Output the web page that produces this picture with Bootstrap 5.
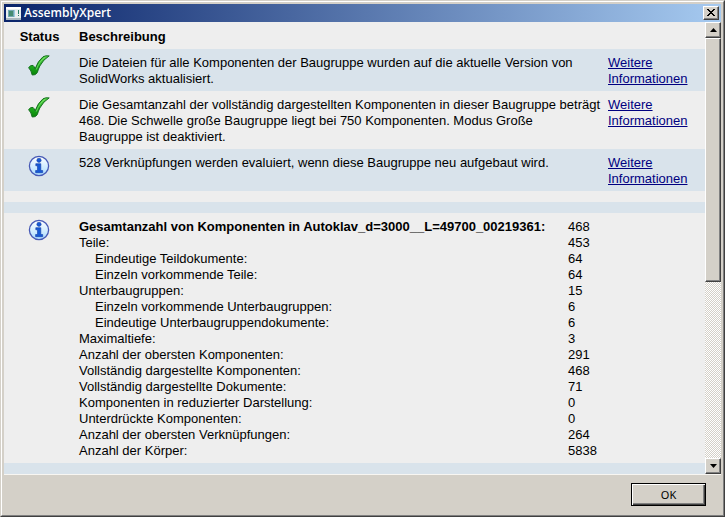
<!DOCTYPE html>
<html lang="de">
<head>
<meta charset="utf-8">
<meta name="viewport" content="width=device-width, initial-scale=1">
<title>AssemblyXpert</title>
<link href="https://cdn.jsdelivr.net/npm/bootstrap@5.3.0/dist/css/bootstrap.min.css" rel="stylesheet">
<style>
  body { font-family: "Liberation Sans", Arial, sans-serif; font-size: 13px; line-height: 16px; color: #000; background: #fff; padding: 0 2px 2px 0; }
  .dialog-frame { background: #d4d0c8; border: 1px solid; border-color: #d4d0c8 #404040 #404040 #d4d0c8; }
  .dialog-edge { border: 1px solid; border-color: #fff #808080 #808080 #fff; padding: 2px; }
  .title-strip { height: 18px; padding: 0 2px; background: linear-gradient(90deg, #0a246a, #a6caf0); color: #fff; }
  .title-strip h1 { font: 600 12px/18px "Open Sans", sans-serif; padding-left: 3px; }
  .face { background: #d4d0c8; border: 1px solid; border-color: #fff #404040 #404040 #fff; box-shadow: inset -1px -1px #808080; padding: 0; border-radius: 0; color: #000; }
  .face svg, .title-strip svg { display: block; }
  .close-btn { width: 16px; height: 14px; }
  .report-pane { background: #eee; border-bottom: 1px solid #f8f6f2; }
  .report { table-layout: fixed; width: 100%; border-collapse: collapse; }
  .report th, .report td { padding: 6px 4px 4px 6px; vertical-align: top; }
  .report thead th { padding-top: 7px; padding-bottom: 4px; }
  .report .finding { white-space: nowrap; padding-right: 0; }
  .report .tint { background: #d9e3eb; }
  .report .gap-row td { height: 11px; padding: 0; }
  .col-status { width: 69px; }
  .col-more { width: 103px; }
  .report .state { padding: 5px 0 0 1px; text-align: center; }
  .report a { color: #000080; }
  .report .totals th, .report .totals td { padding: 0; font-weight: 400; }
  .report .totals .total-main th { font-weight: 700; }
  .report .totals .sub th { padding-left: 16px; }
  .totals-label { width: 489px; }
  .scroller { width: 16px; background: repeating-conic-gradient(#fff 0 25%, #d4d0c8 0 50%) 0 0 / 2px 2px; }
  .scroll-btn { height: 16px; }
  .thumb { height: 244px; }
  .scroll-btn, .thumb { width: 16px; }
  .footer-strip { padding: 8px 15px 9px; }
  .ok-btn { width: 75px; height: 23px; border: 1px solid #000; border-radius: 0; background: #d4d0c8; box-shadow: inset 1px 1px #fff, inset -1px -1px #404040, inset -2px -2px #808080; font: 11px/19px "Noto Sans", sans-serif; padding: 0; color: #000; }
</style>
<script src="https://cdn.jsdelivr.net/npm/bootstrap@5.3.0/dist/js/bootstrap.bundle.min.js"></script>
</head>
<body class="vh-100">
<svg class="position-absolute" width="0" height="0" aria-hidden="true">
  <defs>
    <linearGradient id="leaf" x1="0" y1="0" x2="0" y2="1"><stop offset="0" stop-color="#58d548"/><stop offset=".55" stop-color="#1dab1d"/><stop offset="1" stop-color="#078307"/></linearGradient>
    <linearGradient id="sky" x1="0" y1="0" x2="0" y2="1"><stop offset="0" stop-color="#fff"/><stop offset="1" stop-color="#aadcff"/></linearGradient>
  </defs>
  <symbol id="tick" viewBox="0 0 24 24">
    <path d="M1.6 13.6 Q3.6 11 6 11.4 Q7.2 12 8 15 Q11 6.6 16 2.8 Q18.6 1.3 22.2 1.9 Q16.4 5.3 12.8 12 Q11.3 15 10.3 18.6 Q9 21.4 5.2 21 Q4.4 16.6 1.6 13.6Z" fill="url(#leaf)" stroke="#167020" stroke-width="1"/>
    <path d="M9.3 15.5 Q12.5 7 18.2 3.2" fill="none" stroke="#8be77a" stroke-width="1" opacity=".7"/>
  </symbol>
  <symbol id="info" viewBox="0 0 24 24">
    <circle cx="12" cy="12" r="9.6" fill="url(#sky)" stroke="#4659b5" stroke-width="1.3"/>
    <circle cx="12" cy="6.3" r="2.1" fill="#1559d6" stroke="#123ca6" stroke-width=".6"/>
    <path d="M8.8 9.7h5v6.8h1.9v2.2H8.6v-2.2h1.9v-4.7H8.8z" fill="#1559d6" stroke="#123ca6" stroke-width=".6"/>
  </symbol>
</svg>
<div class="dialog-frame h-100 d-flex">
  <div class="dialog-edge flex-fill d-flex flex-column">
    <header class="title-strip d-flex align-items-center">
      <svg width="15" height="13" viewBox="0 0 15 13" aria-hidden="true"><path fill="#e8eeee" d="M0 0h15v13H0z"/><path fill="#fff" d="M0 0h15v2H0z"/><path fill="#74a8b3" d="M2 3h6v7H2z"/><path fill="#448b70" d="M3 4h4v5H3z"/><path fill="#9bcbe0" d="M8 3h1v7H8z"/><path fill="#277f65" d="M12 3h1v4h-1zM12 8h1v1h-1z"/><path fill="#a9b8bf" d="M0 11h15v2H0z"/></svg>
      <h1 class="m-0 flex-fill">AssemblyXpert</h1>
      <button type="button" class="face close-btn" aria-label="Schließen"><svg width="14" height="12" viewBox="0 0 14 12"><path d="M3 2l7 7M4 2l7 7M10 2L3 9M11 2L4 9" stroke="#000" stroke-width="1"/></svg></button>
    </header>
    <main class="report-pane flex-fill d-flex">
      <div class="flex-fill">
        <table class="report">
          <colgroup><col class="col-status"><col><col class="col-more"></colgroup>
          <thead><tr><th class="text-center" scope="col">Status</th><th scope="col">Beschreibung</th><th></th></tr></thead>
          <tbody>
            <tr class="tint">
              <td class="state"><svg width="24" height="24" role="img" aria-label="OK"><use href="#tick"/></svg></td>
              <td class="finding">Die Dateien für alle Komponenten der Baugruppe wurden auf die aktuelle Version von<br>SolidWorks aktualisiert.</td>
              <td><a href="#">Weitere<br>Informationen</a></td>
            </tr>
            <tr>
              <td class="state"><svg width="24" height="24" role="img" aria-label="OK"><use href="#tick"/></svg></td>
              <td class="finding">Die Gesamtanzahl der vollständig dargestellten Komponenten in dieser Baugruppe beträgt<br>468. Die Schwelle große Baugruppe liegt bei 750 Komponenten. Modus Große<br>Baugruppe ist deaktiviert.</td>
              <td><a href="#">Weitere<br>Informationen</a></td>
            </tr>
            <tr class="tint">
              <td class="state"><svg width="24" height="24" role="img" aria-label="Info"><use href="#info"/></svg></td>
              <td class="finding">528 Verknüpfungen werden evaluiert, wenn diese Baugruppe neu aufgebaut wird.</td>
              <td><a href="#">Weitere<br>Informationen</a></td>
            </tr>
            <tr class="gap-row"><td colspan="3"></td></tr>
            <tr class="gap-row tint"><td colspan="3"></td></tr>
            <tr>
              <td class="state"><svg width="24" height="24" role="img" aria-label="Info"><use href="#info"/></svg></td>
              <td colspan="2">
                <table class="totals">
                  <colgroup><col class="totals-label"><col></colgroup>
                  <tbody>
                    <tr class="total-main"><th scope="row">Gesamtanzahl von Komponenten in Autoklav_d=3000__L=49700_00219361:</th><td>468</td></tr>
                    <tr><th scope="row">Teile:</th><td>453</td></tr>
                    <tr class="sub"><th scope="row">Eindeutige Teildokumente:</th><td>64</td></tr>
                    <tr class="sub"><th scope="row">Einzeln vorkommende Teile:</th><td>64</td></tr>
                    <tr><th scope="row">Unterbaugruppen:</th><td>15</td></tr>
                    <tr class="sub"><th scope="row">Einzeln vorkommende Unterbaugruppen:</th><td>6</td></tr>
                    <tr class="sub"><th scope="row">Eindeutige Unterbaugruppendokumente:</th><td>6</td></tr>
                    <tr><th scope="row">Maximaltiefe:</th><td>3</td></tr>
                    <tr><th scope="row">Anzahl der obersten Komponenten:</th><td>291</td></tr>
                    <tr><th scope="row">Vollständig dargestellte Komponenten:</th><td>468</td></tr>
                    <tr><th scope="row">Vollständig dargestellte Dokumente:</th><td>71</td></tr>
                    <tr><th scope="row">Komponenten in reduzierter Darstellung:</th><td>0</td></tr>
                    <tr><th scope="row">Unterdrückte Komponenten:</th><td>0</td></tr>
                    <tr><th scope="row">Anzahl der obersten Verknüpfungen:</th><td>264</td></tr>
                    <tr><th scope="row">Anzahl der Körper:</th><td>5838</td></tr>
                  </tbody>
                </table>
              </td>
            </tr>
            <tr class="gap-row tint"><td colspan="3"></td></tr>
          </tbody>
        </table>
      </div>
      <div class="scroller d-flex flex-column">
        <button type="button" class="face scroll-btn d-flex align-items-center justify-content-center" aria-label="Nach oben"><svg width="7" height="4" viewBox="0 0 7 4"><path d="M3.5 0L7 4H0z"/></svg></button>
        <div class="face thumb"></div>
        <button type="button" class="face scroll-btn mt-auto d-flex align-items-center justify-content-center" aria-label="Nach unten"><svg width="7" height="4" viewBox="0 0 7 4"><path d="M0 0h7L3.5 4z"/></svg></button>
      </div>
    </main>
    <footer class="footer-strip d-flex justify-content-end">
      <button type="button" class="ok-btn">OK</button>
    </footer>
  </div>
</div>
</body>
</html>
